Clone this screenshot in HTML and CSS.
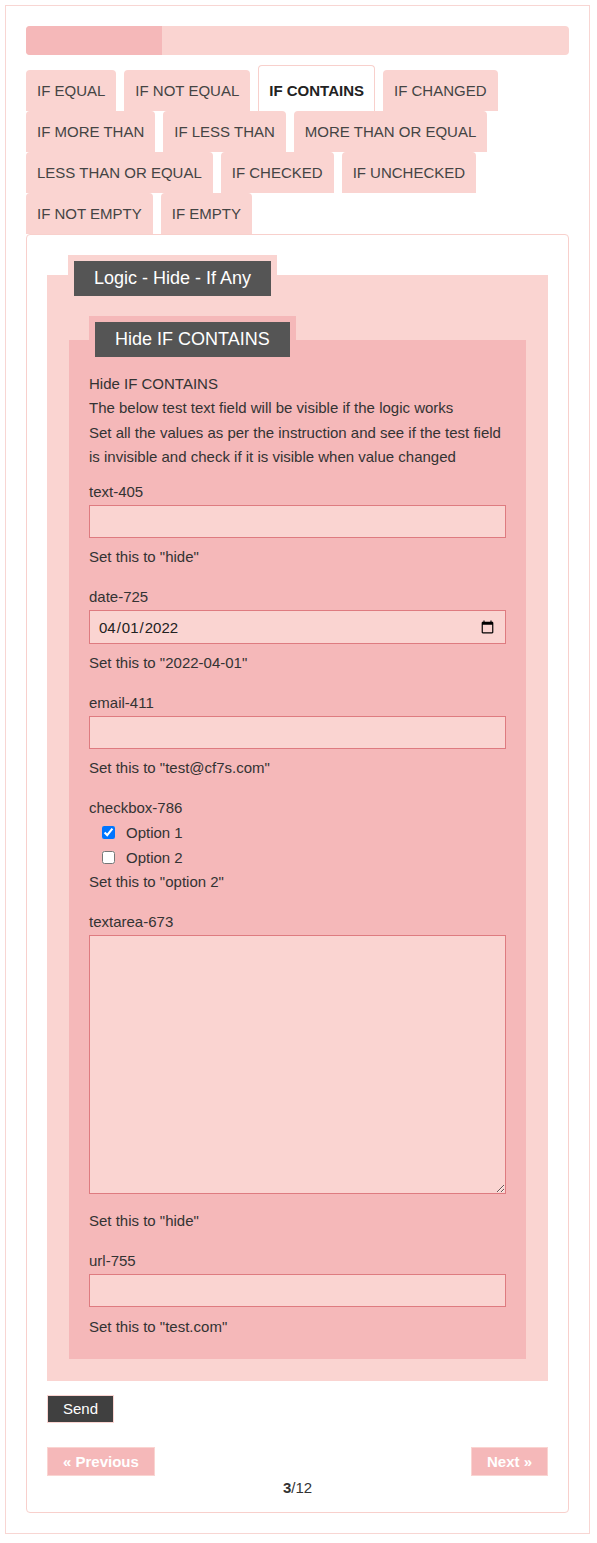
FILE: index.html
```html
<!DOCTYPE html>
<html lang="en">
<head>
<meta charset="utf-8">
<title>Logic - Hide - If Any</title>
<link rel="stylesheet" href="styles.css">
</head>
<body>
<div class="frame">
  <div class="progress"><div class="progress-fill" style="width:25%"></div></div>
  <div class="tabs">
    <span class="tab">IF EQUAL</span>
    <span class="tab">IF NOT EQUAL</span>
    <span class="tab active">IF CONTAINS</span>
    <span class="tab">IF CHANGED</span>
    <span class="tab">IF MORE THAN</span>
    <span class="tab">IF LESS THAN</span>
    <span class="tab">MORE THAN OR EQUAL</span>
    <span class="tab">LESS THAN OR EQUAL</span>
    <span class="tab">IF CHECKED</span>
    <span class="tab">IF UNCHECKED</span>
    <span class="tab">IF NOT EMPTY</span>
    <span class="tab">IF EMPTY</span>
  </div>
  <div class="panel">
    <div class="fs-outer">
      <div class="legend legend-outer"><span class="legend-text">Logic - Hide - If Any</span></div>
      <div class="fs-inner">
        <div class="legend legend-inner"><span class="legend-text">Hide IF CONTAINS</span></div>
        <div class="intro">
          Hide IF CONTAINS<br>
          The below test text field will be visible if the logic works<br>
          Set all the values as per the instruction and see if the test field is invisible and check if it is visible when value changed
        </div>

        <div class="label first">text-405</div>
        <input class="field" type="text">
        <div class="hint">Set this to "hide"</div>

        <div class="label">date-725</div>
        <input class="field date" type="date" value="2022-04-01">
        <div class="hint">Set this to "2022-04-01"</div>

        <div class="label">email-411</div>
        <input class="field" type="email">
        <div class="hint">Set this to "test@cf7s.com"</div>

        <div class="label">checkbox-786</div>
        <label class="option"><input class="check" type="checkbox" checked><span>Option 1</span></label>
        <label class="option"><input class="check" type="checkbox"><span>Option 2</span></label>
        <div class="hint tight">Set this to "option 2"</div>

        <div class="label">textarea-673</div>
        <textarea class="area"></textarea>
        <div class="hint after-area">Set this to "hide"</div>

        <div class="label">url-755</div>
        <input class="field" type="url">
        <div class="hint last">Set this to "test.com"</div>
      </div>
    </div>
    <button class="send" type="button">Send</button>
    <div class="nav">
      <button class="nav-btn" type="button">« Previous</button>
      <button class="nav-btn" type="button">Next »</button>
    </div>
    <div class="counter"><b>3</b>/12</div>
  </div>
</div>
</body>
</html>
```
FILE: styles.css
```css
* { box-sizing: border-box; }
html, body { margin: 0; padding: 0; background: #fff; }
body {
  font-family: "Liberation Sans", Arial, sans-serif;
  font-size: 15px;
  color: #333;
  padding: 5px 0 10px 5px;
}
.frame {
  width: 585px;
  border: 1px solid #f8d6d3;
  padding: 20px 20px 20px 20px;
}
.progress {
  height: 29px;
  background: #fad4d1;
  border-radius: 4px;
  overflow: hidden;
}
.progress-fill {
  height: 100%;
  background: #f5b8b9;
}
.tabs {
  display: flex;
  flex-wrap: wrap;
  align-items: flex-start;
  margin-top: 15px;
}
.tab {
  display: block;
  height: 41px;
  line-height: 41px;
  padding: 0 11px;
  margin-right: 8px;
  background: #fad4d1;
  color: #444;
  border-radius: 4px 4px 0 0;
  white-space: nowrap;
}
.tab.active {
  height: 46px;
  margin-top: -5px;
  padding: 4px 10px 0;
  line-height: 41px;
  background: #fff;
  border: 1px solid #f8d0cc;
  border-bottom: none;
  font-weight: bold;
  color: #222;
}
.panel {
  border: 1px solid #f8d0cc;
  border-radius: 4px;
  padding: 20px 20px 12px;
}
.fs-outer {
  background: #fad4d1;
  margin-top: 20px;
  padding: 0 22px 22px;
  display: flow-root;
}
.legend {
  display: block;
  width: max-content;
  padding: 6px;
}
.legend-outer {
  margin-top: -20px;
  margin-left: -1px;
  background: #fad4d1;
}
.legend-inner {
  margin-top: -24px;
  margin-left: 0;
  background: #f5b8b9;
}
.legend-text {
  display: block;
  height: 35px;
  line-height: 35px;
  padding: 0 20px;
  background: #555;
  color: #fff;
  font-size: 18px;
}
.fs-inner {
  background: #f5b8b9;
  margin-top: 38px;
  padding: 0 20px 20px;
  display: flow-root;
}
.intro {
  margin-top: 9px;
  line-height: 24.3px;
}
.label, .hint {
  line-height: 24px;
}
.label { margin-top: 16px; }
.label.first { margin-top: 11px; }
.field {
  display: block;
  width: 100%;
  height: 33px;
  margin: 1px 0 0;
  border: 1px solid #de7b80;
  background: #fad4d1;
  font-family: "Liberation Sans", Arial, sans-serif;
  font-size: 15px;
  color: #222;
  padding: 0 8px;
  outline: none;
}
.field.date { height: 34px; }
.hint { margin-top: 7px; }
.hint.tight { margin-top: 0; }
.hint.after-area { margin-top: 15px; }
.hint.last { margin-top: 8px; }
.option {
  display: flex;
  align-items: center;
  height: 25px;
  padding-left: 13px;
}
.check {
  width: 13px;
  height: 13px;
  margin: 0 11px 0 0;
}
.area {
  display: block;
  width: 100%;
  height: 259px;
  margin-top: 1px;
  border: 1px solid #de7b80;
  background: #fad4d1;
  font-family: "Liberation Sans", Arial, sans-serif;
  font-size: 15px;
  resize: vertical;
  outline: none;
}
.send {
  display: block;
  margin-top: 14px;
  height: 28px;
  padding: 0 15px;
  background: #404040;
  color: #fff;
  border: 1px solid #fad4d1;
  font-family: "Liberation Sans", Arial, sans-serif;
  font-size: 15px;
  line-height: 26px;
}
.nav {
  display: flex;
  justify-content: space-between;
  margin-top: 24px;
}
.nav-btn {
  height: 29px;
  padding: 0 15px;
  background: #f5b8b9;
  color: #fff;
  border: 1px solid #fad4d1;
  font-family: "Liberation Sans", Arial, sans-serif;
  font-size: 15px;
  font-weight: bold;
  line-height: 27px;
}
.counter {
  text-align: center;
  line-height: 24px;
  color: #333;
}
```
